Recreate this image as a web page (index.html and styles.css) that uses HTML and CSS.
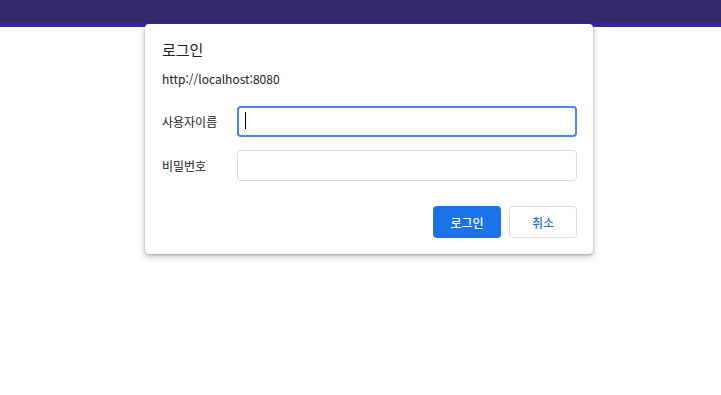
FILE: index.html
```html
<!DOCTYPE html>
<html lang="ko">
<head>
    <meta charset="UTF-8">
    <meta name="viewport" content="width=device-width, initial-scale=1.0">
    <title>로그인</title>
    <link rel="stylesheet" href="styles.css">
</head>
<body>
    <div class="topbar"></div>

    <div class="dialog">
        <h1>로그인</h1>
        <p class="origin">http://localhost:8080</p>

        <div class="field">
            <label for="username">사용자이름</label>
            <div class="input-wrap">
                <input type="text" id="username" class="focused">
                <span class="caret"></span>
            </div>
        </div>

        <div class="field">
            <label for="password">비밀번호</label>
            <div class="input-wrap">
                <input type="password" id="password">
            </div>
        </div>

        <div class="actions">
            <button class="primary">로그인</button>
            <button class="secondary">취소</button>
        </div>
    </div>
</body>
</html>
```

FILE: styles.css
```css
body {
    margin: 0;
    font-family: "Noto Sans CJK KR", "Noto Sans", sans-serif;
    background-color: white;
    color: #202124;
}

.topbar {
    height: 23px;
    background-color: #31296a;
    border-bottom: 4px solid #3a25a6;
}

.dialog {
    position: absolute;
    top: 24px;
    left: 145px;
    width: 448px;
    box-sizing: border-box;
    padding: 15px 16px 16px 17px;
    background-color: white;
    border-radius: 4px;
    box-shadow: 0 1px 3px rgba(60,64,67,0.35), 0 3px 6px 1px rgba(60,64,67,0.2);
}

h1 {
    margin: 0;
    font-size: 15px;
    font-weight: normal;
    line-height: 22px;
}

.origin {
    margin: 9px 0 18px;
    font-size: 12px;
    line-height: 18px;
}

.field {
    display: flex;
    align-items: center;
    margin-bottom: 13px;
}

label {
    width: 75px;
    font-size: 12px;
}

.input-wrap {
    position: relative;
    flex: 1;
    display: flex;
}

input {
    flex: 1;
    height: 31px;
    box-sizing: border-box;
    border: 1px solid #dadce0;
    border-radius: 4px;
    padding: 0 8px;
    font-size: 14px;
    outline: none;
}

input.focused {
    border: 2px solid #4a84ec;
}

.caret {
    position: absolute;
    left: 8px;
    top: 6px;
    width: 1px;
    height: 17px;
    background-color: #000;
}

.actions {
    display: flex;
    justify-content: flex-end;
    gap: 8px;
    margin-top: 25px;
}

button {
    width: 68px;
    height: 32px;
    border-radius: 4px;
    font-family: inherit;
    font-size: 12px;
    font-weight: 500;
    cursor: pointer;
}

.primary {
    background-color: #1a73e8;
    color: white;
    border: none;
}

.secondary {
    background-color: white;
    color: #1a73e8;
    border: 1px solid #dadce0;
}
```
